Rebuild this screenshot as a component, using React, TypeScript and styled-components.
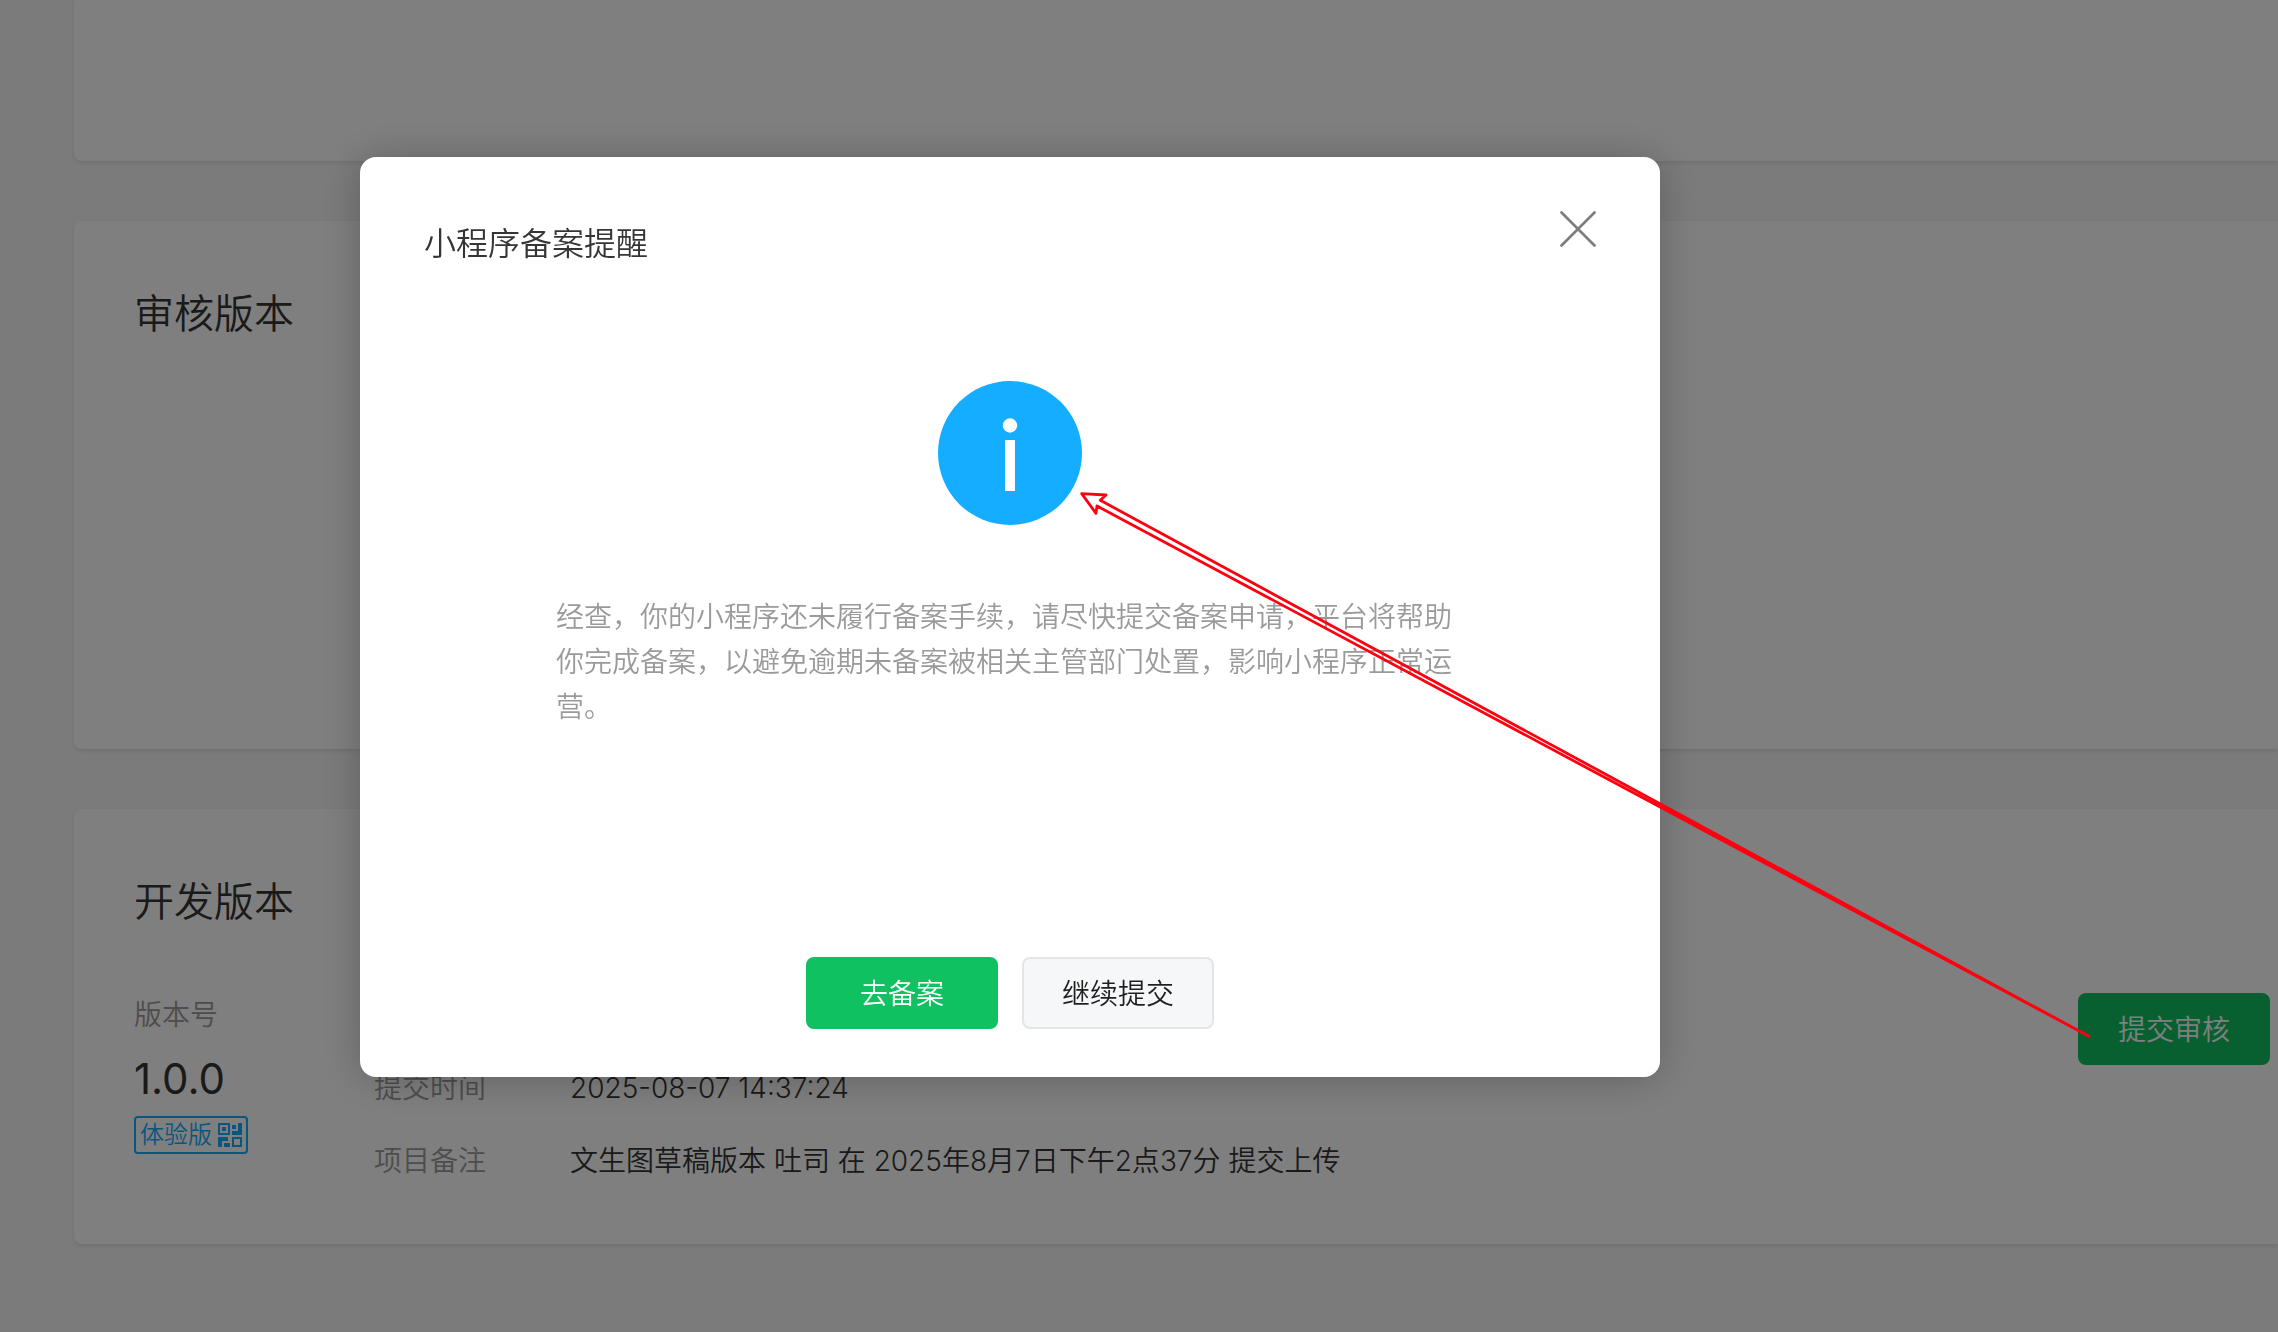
import React from "react";
import styled, { createGlobalStyle } from "styled-components";

const GlobalStyle = createGlobalStyle`
  *, *::before, *::after { box-sizing: border-box; }
  body {
    margin: 0;
    background: #f7f7f8;
    color: #353535;
    font-family: Inter, "Noto Sans CJK SC", sans-serif;
    font-size: 28px;
    font-weight: 350;
    line-height: 45px;
    overflow: hidden;
  }
  h1, h2, p, dl, dd { margin: 0; font-weight: inherit; }
`;

const Page = styled.main`
  display: flex;
  flex-direction: column;
  gap: 60px;
  min-height: 100vh;
  padding-left: 74px;
`;

const Card = styled.section<{ $minHeight: number; $first?: boolean }>`
  min-height: ${(p) => p.$minHeight}px;
  padding: 65px 8px 60px 60px;
  background: #fff;
  border-radius: ${(p) => (p.$first ? "0 0 0 8px" : "8px 0 0 8px")};
  box-shadow: 0 2px 4px rgba(0, 0, 0, 0.1);
`;

const CardTitle = styled.h2`
  font-size: 40px;
  line-height: 56px;
`;

const VersionRow = styled.div`
  display: grid;
  grid-template-columns: 240px 1fr auto;
  align-items: start;
  padding-top: 63px;
`;

const VersionInfo = styled.div`
  display: flex;
  flex-direction: column;
  align-items: flex-start;
`;

const Label = styled.span`
  color: #9a9a9a;
`;

const VersionNumber = styled.strong`
  margin: 9px 0 5px;
  font-size: 42px;
  font-weight: 400;
  line-height: 64px;
`;

const TrialButton = styled.button`
  display: flex;
  align-items: center;
  gap: 6px;
  height: 38px;
  padding: 0 4px;
  border: 2px solid #14adff;
  border-radius: 4px;
  background: none;
  color: #14adff;
  font: inherit;
  font-size: 24px;
  line-height: 34px;
`;

const Details = styled.dl`
  display: grid;
  grid-template-columns: 196px 1fr;
  row-gap: 28px;
  padding-top: 73px;

  dt { color: #9a9a9a; }
`;

const Button = styled.button<{ $primary?: boolean }>`
  width: 192px;
  height: 72px;
  padding: 2px 0 0;
  border: 2px solid ${(p) => (p.$primary ? "#10c161" : "#e4e5e7")};
  border-radius: 8px;
  background: ${(p) => (p.$primary ? "#10c161" : "#f6f7f9")};
  color: ${(p) => (p.$primary ? "#fff" : "#1f1f1f")};
  font: inherit;
`;

const Mask = styled.div`
  position: fixed;
  inset: 0;
  padding: 157px 24px 0 360px;
  background: rgba(0, 0, 0, 0.5);
`;

const Dialog = styled.div`
  display: flex;
  flex-direction: column;
  width: 100%;
  max-width: 1300px;
  min-height: 920px;
  padding: 48px 64px;
  border-radius: 16px;
  background: #fff;
  box-shadow: 0 2px 40px rgba(0, 0, 0, 0.24);
`;

const DialogHeader = styled.header`
  display: flex;
  justify-content: space-between;
  align-items: flex-start;
`;

const DialogTitle = styled.h1`
  padding-top: 16px;
  font-size: 32px;
`;

const CloseButton = styled.button`
  display: flex;
  padding: 6px 0;
  border: 0;
  background: none;
`;

const DialogBody = styled.div`
  display: flex;
  flex: 1;
  flex-direction: column;
  align-items: center;
  gap: 70px;
  padding: 115px 132px 0;
`;

const Message = styled.p`
  width: 100%;
  max-width: 908px;
  color: #9a9a9a;
`;

const DialogFooter = styled.footer`
  display: flex;
  justify-content: center;
  gap: 24px;
`;

const Annotation = styled.svg`
  position: absolute;
  top: 0;
  left: 0;
  pointer-events: none;
`;

const QrIcon = () => (
  <svg width="24" height="24" viewBox="0 0 24 24" fill="currentColor" aria-hidden="true">
    <path fillRule="evenodd" d="M0 0h12v12H0zM2 2v8h8V2zM4 4h4v4H4zM14 2h4v4h-4zM20 0h4v12H14V8h6zM0 14h10v4H4v6H0zM6 20h6v4H6zM14 14h10v10H14zM16 16v6h6v-6z" />
  </svg>
);

const CloseIcon = () => (
  <svg width="36" height="36" viewBox="0 0 36 36" fill="none" stroke="#7c7d7e" strokeWidth="2.7" strokeLinecap="round" aria-hidden="true">
    <path d="M1.5 1.5l33 33M34.5 1.5l-33 33" />
  </svg>
);

const InfoIcon = () => (
  <svg width="144" height="144" viewBox="0 0 144 144" aria-hidden="true">
    <circle cx="72" cy="72" r="72" fill="#14adff" />
    <circle cx="72" cy="44.5" r="7.2" fill="#fff" />
    <path d="M67 59h10v51H67z" fill="#fff" />
  </svg>
);

export default function App() {
  return (
    <>
      <GlobalStyle />
      <Page>
        <Card $minHeight={161} $first />
        <Card $minHeight={528}>
          <CardTitle>审核版本</CardTitle>
        </Card>
        <Card $minHeight={435}>
          <CardTitle>开发版本</CardTitle>
          <VersionRow>
            <VersionInfo>
              <Label>版本号</Label>
              <VersionNumber>1.0.0</VersionNumber>
              <TrialButton type="button">
                体验版
                <QrIcon />
              </TrialButton>
            </VersionInfo>
            <Details>
              <dt>提交时间</dt>
              <dd>2025-08-07 14:37:24</dd>
              <dt>项目备注</dt>
              <dd>文生图草稿版本 吐司 在 2025年8月7日下午2点37分 提交上传</dd>
            </Details>
            <Button type="button" $primary>提交审核</Button>
          </VersionRow>
        </Card>
      </Page>
      <Mask>
        <Dialog role="dialog" aria-modal="true" aria-labelledby="dialog-title">
          <DialogHeader>
            <DialogTitle id="dialog-title">小程序备案提醒</DialogTitle>
            <CloseButton type="button" aria-label="关闭">
              <CloseIcon />
            </CloseButton>
          </DialogHeader>
          <DialogBody>
            <InfoIcon />
            <Message>
              经查，你的小程序还未履行备案手续，请尽快提交备案申请，平台将帮助你完成备案，以避免逾期未备案被相关主管部门处置，影响小程序正常运营。
            </Message>
          </DialogBody>
          <DialogFooter>
            <Button type="button" $primary>去备案</Button>
            <Button type="button">继续提交</Button>
          </DialogFooter>
        </Dialog>
      </Mask>
      <Annotation width="2278" height="1332" viewBox="0 0 2278 1332" fill="none" aria-hidden="true">
        <path
          d="M2089 1036.3L1100.3 500.3L1106 495L1081.7 493.7L1096 513.3L1097 506Z"
          stroke="#ff0010"
          strokeWidth="2.8"
          strokeLinejoin="round"
        />
      </Annotation>
    </>
  );
}
